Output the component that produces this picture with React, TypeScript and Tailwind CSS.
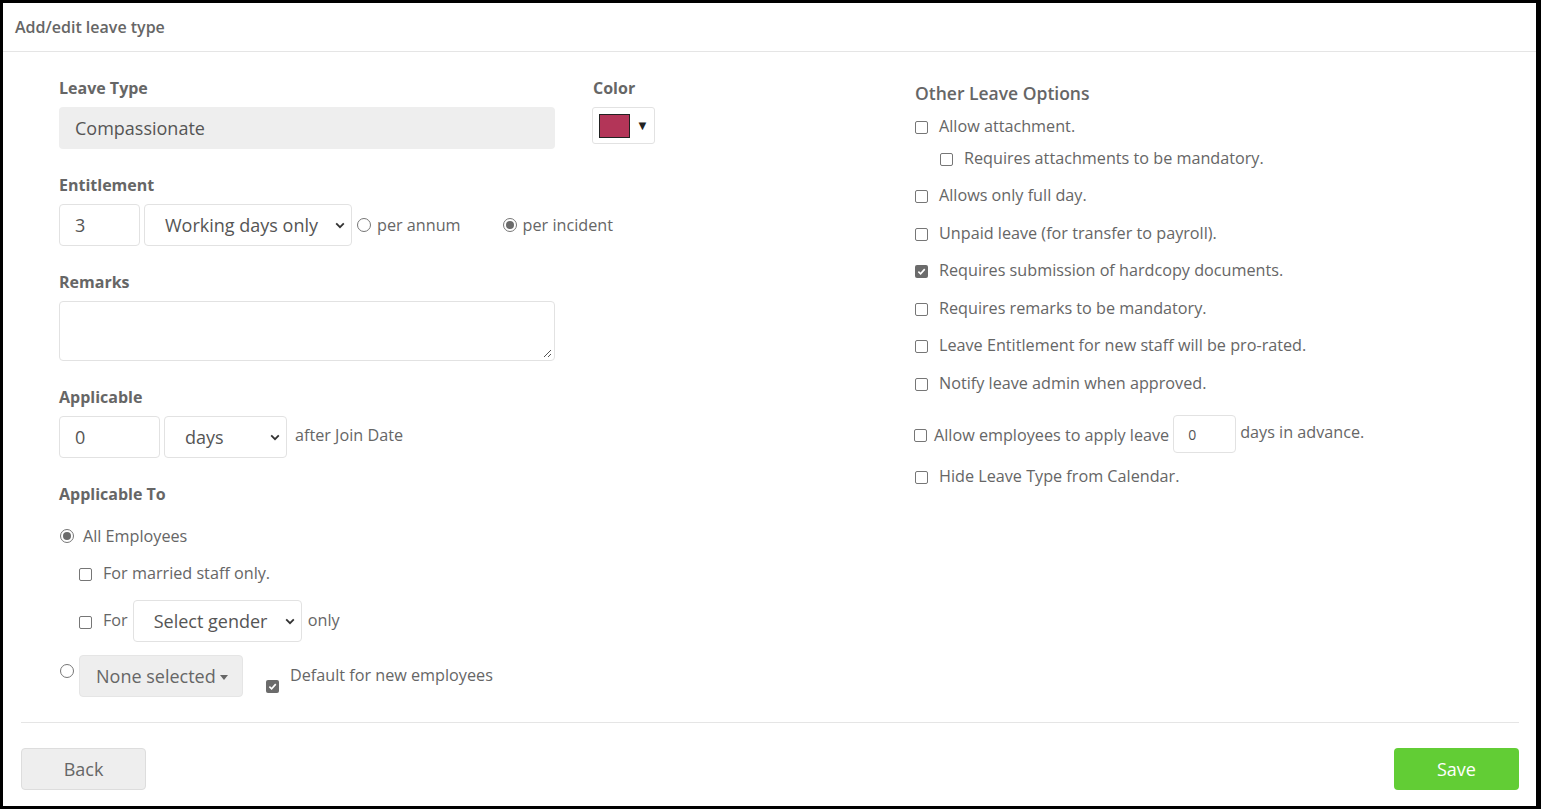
import React from "react";

// Add/edit leave type form

function Checkbox({ checked = false }: { checked?: boolean }) {
  if (checked) {
    return (
      <span className="inline-flex h-[13px] w-[13px] shrink-0 items-center justify-center rounded-[2px] bg-[#6b6b6b]">
        <svg width="9" height="9" viewBox="0 0 10 10">
          <path d="M1.5 5.2 L4 7.6 L8.6 2.4" fill="none" stroke="#fff" strokeWidth="1.8" />
        </svg>
      </span>
    );
  }
  return <span className="inline-block h-[13px] w-[13px] shrink-0 rounded-[2px] border border-[#767676] bg-white" />;
}

function Radio({ checked = false }: { checked?: boolean }) {
  return (
    <span className="inline-flex h-[14px] w-[14px] shrink-0 items-center justify-center rounded-full border border-[#767676] bg-white">
      {checked && <span className="h-[8px] w-[8px] rounded-full bg-[#6b6b6b]" />}
    </span>
  );
}

function Chevron() {
  return (
    <svg width="10" height="7" viewBox="0 0 10 7" className="shrink-0">
      <path d="M1.2 1.4 L5 5.2 L8.8 1.4" fill="none" stroke="#333" strokeWidth="1.8" />
    </svg>
  );
}

function Select({ value, className }: { value: string; className: string }) {
  return (
    <div className={`flex h-[42px] items-center justify-between rounded-[4px] border border-[#e2e2e2] bg-white pl-[20px] pr-[6px] text-[18px] text-[#555] ${className}`}>
      <span>{value}</span>
      <Chevron />
    </div>
  );
}

function Label({ children }: { children: React.ReactNode }) {
  return <div className="h-[22px] text-[16px] leading-[22px] font-bold text-[#666]">{children}</div>;
}

function Option({ text, checked, className = "" }: { text: string; checked?: boolean; className?: string }) {
  return (
    <div className={`flex h-[22px] items-center gap-[11px] text-[16.2px] leading-[22px] ${className}`}>
      <span className="mt-[3px] flex"><Checkbox checked={checked} /></span>
      <span>{text}</span>
    </div>
  );
}

export default function App() {
  return (
    <div className="flex h-[809px] w-[1541px] flex-col border-t-[3px] border-r-[5px] border-b-[3px] border-l-[3px] border-black bg-white font-['Open_Sans',sans-serif] text-[#666]">
      <div className="flex h-[49px] items-center border-b border-[#e5e5e5] pl-[12px] text-[16px] font-semibold text-[#666]">
        Add/edit leave type
      </div>

      <div className="flex h-[670px] pt-[25px] pl-[56px]">
        {/* left column */}
        <div className="flex w-[856px] flex-col">
          <div className="flex">
            <div className="w-[496px]">
              <Label>Leave Type</Label>
              <div className="mt-2 flex h-[42px] items-center rounded-[4px] bg-[#eeeeee] pl-[16px] text-[18px] text-[#555]">Compassionate</div>
            </div>
            <div className="ml-[38px]">
              <Label>Color</Label>
              <div className="mt-2 -ml-px flex h-[37px] w-[63px] items-center rounded-[3px] border border-[#e2e2e2] bg-white pl-[6px]">
                <span className="h-[24px] w-[31px] border border-[#222] bg-[#b33558]" />
                <span className="ml-[6px] text-[13px] text-[#222]">▼</span>
              </div>
            </div>
          </div>

          <div className="mt-[25px]">
            <Label>Entitlement</Label>
            <div className="mt-2 flex h-[42px] items-center">
              <div className="flex h-[42px] w-[81px] items-center rounded-[4px] border border-[#e2e2e2] pl-[15px] text-[18px] text-[#555]">3</div>
              <Select value="Working days only" className="ml-[4px] w-[208px]" />
              <div className="ml-[5px] flex items-center gap-[6px] text-[16.2px]">
                <Radio />
                <span>per annum</span>
              </div>
              <div className="ml-[42px] flex items-center gap-[6px] text-[16.2px]">
                <Radio checked />
                <span>per incident</span>
              </div>
            </div>
          </div>

          <div className="mt-[25px]">
            <Label>Remarks</Label>
            <div className="relative mt-2 h-[60px] w-[496px] rounded-[4px] border border-[#e2e2e2]">
              <svg width="9" height="9" viewBox="0 0 9 9" className="absolute right-[2px] bottom-[2px]">
                <path d="M8 1 L1 8 M8 5 L5 8" stroke="#555" strokeWidth="1" />
              </svg>
            </div>
          </div>

          <div className="mt-[25px]">
            <Label>Applicable</Label>
            <div className="mt-2 flex h-[42px] items-center">
              <div className="flex h-[42px] w-[101px] items-center rounded-[4px] border border-[#e2e2e2] pl-[15px] text-[18px] text-[#555]">0</div>
              <Select value="days" className="ml-[4px] w-[123px]" />
              <span className="ml-[8px] -mt-[4px] text-[16.2px]">after Join Date</span>
            </div>
          </div>

          <div className="mt-[25px]">
            <Label>Applicable To</Label>
          </div>
          <div className="mt-[20px] flex h-[22px] items-center gap-[9px] pl-px text-[16.2px]">
            <Radio checked />
            <span>All Employees</span>
          </div>
          <div className="mt-[15px] flex h-[22px] items-center gap-[11px] pl-[20px] text-[16.2px]">
            <span className="mt-[3px] flex"><Checkbox /></span>
            <span>For married staff only.</span>
          </div>
          <div className="mt-[16px] flex h-[42px] items-center pl-[20px] text-[16.2px]">
            <span className="mt-[3px] flex"><Checkbox /></span>
            <span className="ml-[11px] -mt-[2px]">For</span>
            <Select value="Select gender" className="ml-[5px] w-[169px]" />
            <span className="ml-[6px] -mt-[2px]">only</span>
          </div>
          <div className="mt-[13px] flex h-[42px] items-start">
            <span className="mt-[9px] ml-px flex"><Radio /></span>
            <div className="ml-[5px] flex h-[42px] w-[164px] items-center rounded-[4px] border border-[#e5e5e5] bg-[#eeeeee] pl-[16px] text-[18px] text-[#666]">
              None selected
              <span className="ml-[4px] mt-[2px] border-x-[4px] border-t-[5px] border-x-transparent border-t-[#666]" />
            </div>
            <span className="mt-[25px] ml-[23px] flex"><Checkbox checked /></span>
            <span className="mt-[9px] ml-[11px] text-[16.2px] leading-[22px]">Default for new employees</span>
          </div>
        </div>

        {/* right column */}
        <div className="flex flex-col pt-[4px]">
          <div className="h-[25px] text-[17.5px] leading-[25px] font-semibold text-[#666]">Other Leave Options</div>
          <Option className="mt-[9px]" text="Allow attachment." />
          <Option className="mt-[10px] pl-[25px]" text="Requires attachments to be mandatory." />
          <Option className="mt-[15px]" text="Allows only full day." />
          <Option className="mt-[16px]" text="Unpaid leave (for transfer to payroll)." />
          <Option className="mt-[15px]" text="Requires submission of hardcopy documents." checked />
          <Option className="mt-[16px]" text="Requires remarks to be mandatory." />
          <Option className="mt-[15px]" text="Leave Entitlement for new staff will be pro-rated." />
          <Option className="mt-[16px]" text="Notify leave admin when approved." />
          <div className="mt-[21px] flex h-[38px] items-center text-[16.2px]">
            <span className="-ml-px mt-[3px] flex"><Checkbox /></span>
            <span className="ml-[7px] mt-[2px]">Allow employees to apply leave</span>
            <div className="ml-[4px] flex h-[38px] w-[63px] items-center rounded-[4px] border border-[#e2e2e2] pl-[14px] text-[14px] text-[#555]">0</div>
            <span className="ml-[4px] -mt-[4px]">days in advance.</span>
          </div>
          <Option className="mt-[12px]" text="Hide Leave Type from Calendar." />
        </div>
      </div>

      <div className="mr-[17px] ml-[18px] flex items-center justify-between border-t border-[#e5e5e5] pt-[25px]">
        <div className="flex h-[42px] w-[125px] items-center justify-center rounded-[4px] border border-[#dddddd] bg-[#eeeeee] text-[18px] text-[#666]">Back</div>
        <div className="flex h-[42px] w-[125px] items-center justify-center rounded-[4px] bg-[#62cd35] text-[18px] text-white">Save</div>
      </div>
    </div>
  );
}
